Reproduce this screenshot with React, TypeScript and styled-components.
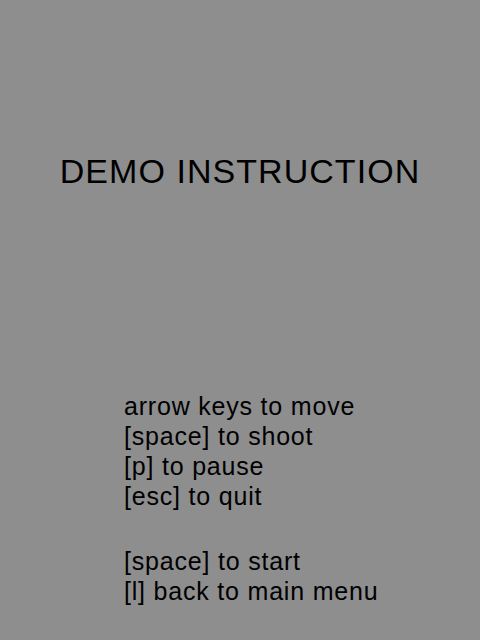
import React from "react";
import styled, { createGlobalStyle } from "styled-components";

const Global = createGlobalStyle`
  html, body {
    margin: 0;
    padding: 0;
    background: #8e8e8e;
  }
  body {
    font-family: "Liberation Sans", Arial, sans-serif;
    color: #000;
  }
`;

const Screen = styled.div`
  width: 480px;
  height: 640px;
  background: #8e8e8e;
  display: flex;
  flex-direction: column;
  overflow: hidden;
`;

const Title = styled.h1`
  margin: 151px 0 0 0;
  font-weight: normal;
  font-size: 34px;
  line-height: 40px;
  letter-spacing: 1.05px;
  text-align: center;
  color: #000;
`;

const Group = styled.div<{ $gap: number }>`
  margin-top: ${(p) => p.$gap}px;
  padding-left: 124px;
  display: flex;
  flex-direction: column;
`;

const Line = styled.div`
  font-size: 25px;
  line-height: 30px;
  letter-spacing: 0.8px;
  color: #000;
  white-space: nowrap;
`;

export default function App() {
  return (
    <>
      <Global />
      <Screen>
        <Title>DEMO INSTRUCTION</Title>
        <Group $gap={200}>
          <Line>arrow keys to move</Line>
          <Line>[space] to shoot</Line>
          <Line>[p] to pause</Line>
          <Line>[esc] to quit</Line>
        </Group>
        <Group $gap={35}>
          <Line>[space] to start</Line>
          <Line>[l] back to main menu</Line>
        </Group>
      </Screen>
    </>
  );
}
